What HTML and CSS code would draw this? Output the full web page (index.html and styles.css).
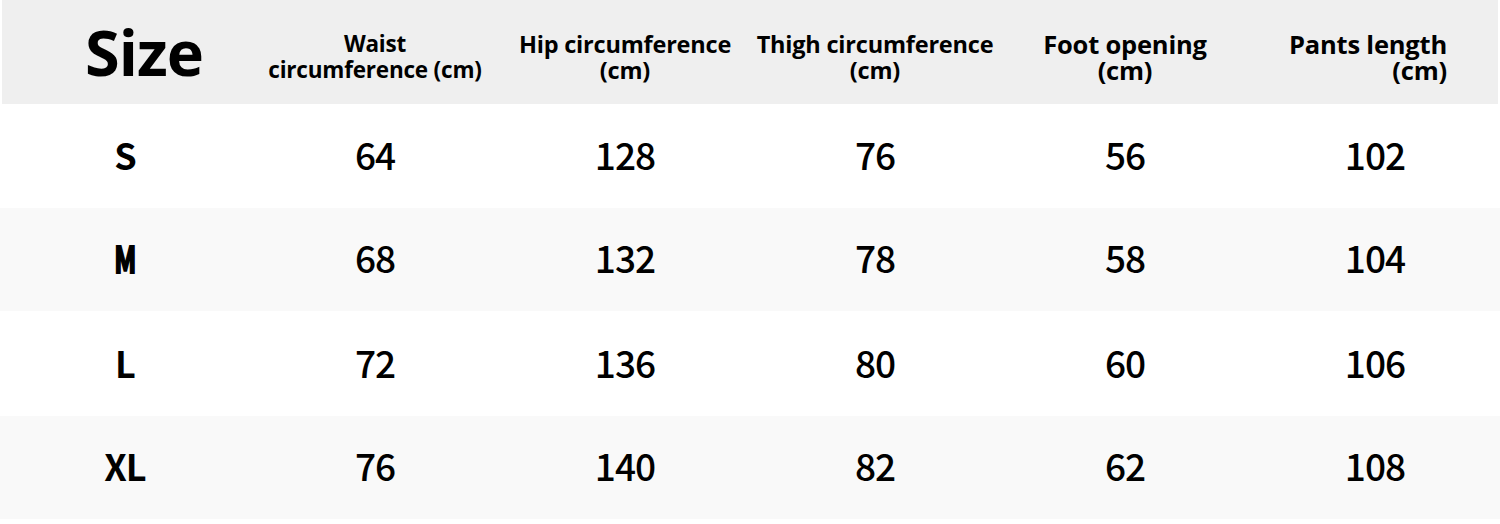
FILE: index.html
```html
<!DOCTYPE html>
<html lang="en">
<head>
  <meta charset="UTF-8">
  <meta name="viewport" content="width=device-width, initial-scale=1.0">
  <title>Size Chart</title>
  <link rel="stylesheet" href="styles.css">
</head>
<body>

<div class="size-chart">
  <!-- Header row -->
  <div class="row head">
    <div class="cell size-title">Size</div>
    <div class="cell waist-head">Waist<br>circumference (cm)</div>
    <div class="cell">Hip circumference<br>(cm)</div>
    <div class="cell">Thigh circumference<br>(cm)</div>
    <div class="cell wide-head">Foot opening<br>(cm)</div>
    <div class="cell wide-head pants-head">Pants length<br>(cm)</div>
  </div>

  <div class="row">
    <div class="cell size">S</div>
    <div class="cell">64</div>
    <div class="cell">128</div>
    <div class="cell">76</div>
    <div class="cell">56</div>
    <div class="cell">102</div>
  </div>
  <div class="row shaded">
    <div class="cell size narrow">M</div>
    <div class="cell">68</div>
    <div class="cell">132</div>
    <div class="cell">78</div>
    <div class="cell">58</div>
    <div class="cell">104</div>
  </div>
  <div class="row">
    <div class="cell size">L</div>
    <div class="cell">72</div>
    <div class="cell">136</div>
    <div class="cell">80</div>
    <div class="cell">60</div>
    <div class="cell">106</div>
  </div>
  <div class="row shaded">
    <div class="cell size">XL</div>
    <div class="cell">76</div>
    <div class="cell">140</div>
    <div class="cell">82</div>
    <div class="cell">62</div>
    <div class="cell">108</div>
  </div>
</div>

</body>
</html>
```

FILE: styles.css
```css
body {
  margin: 0;
  padding: 0;
  background-color: #ffffff;
  color: #000000;
}

.size-chart {
  width: 1500px;
}

.row {
  display: grid;
  grid-template-columns: repeat(6, 250px);
  height: 104px;
  align-items: center;
  font-family: "Noto Sans CJK SC", "Noto Sans", sans-serif;
  font-weight: 500;
  font-size: 37px;
  letter-spacing: -1px;
}

.row.shaded {
  background-color: #f9f9f9;
  height: 103px;
  margin-bottom: 1px;
}

.cell {
  text-align: center;
  padding-bottom: 5px;
}

.cell.size {
  font-weight: bold;
  font-size: 36px;
}

/* the M in the reference is a tall, heavy, condensed glyph */
.cell.size.narrow {
  transform: scaleX(0.72);
  -webkit-text-stroke: 2px #000000;
}

/* header */
.row.head {
  grid-template-columns: 248px 250px 250px 250px 250px 248px;
  margin: 0 2px;
  background-color: #efefef;
  font-family: "Open Sans", sans-serif;
  font-weight: bold;
  font-size: 23.5px;
  line-height: 26px;
  letter-spacing: -0.2px;
}

.row.head .cell {
  padding-top: 10px;
  padding-bottom: 0;
}

.row.head .waist-head {
  font-size: 22.5px;
}

.row.head .wide-head {
  font-size: 25.5px;
}

.row.head .size-title {
  font-size: 63px;
  line-height: 70px;
  letter-spacing: -1px;
  padding-top: 0;
  padding-left: 36px;
}

.row.head .pants-head {
  text-align: right;
  padding-right: 51px;
}
```
